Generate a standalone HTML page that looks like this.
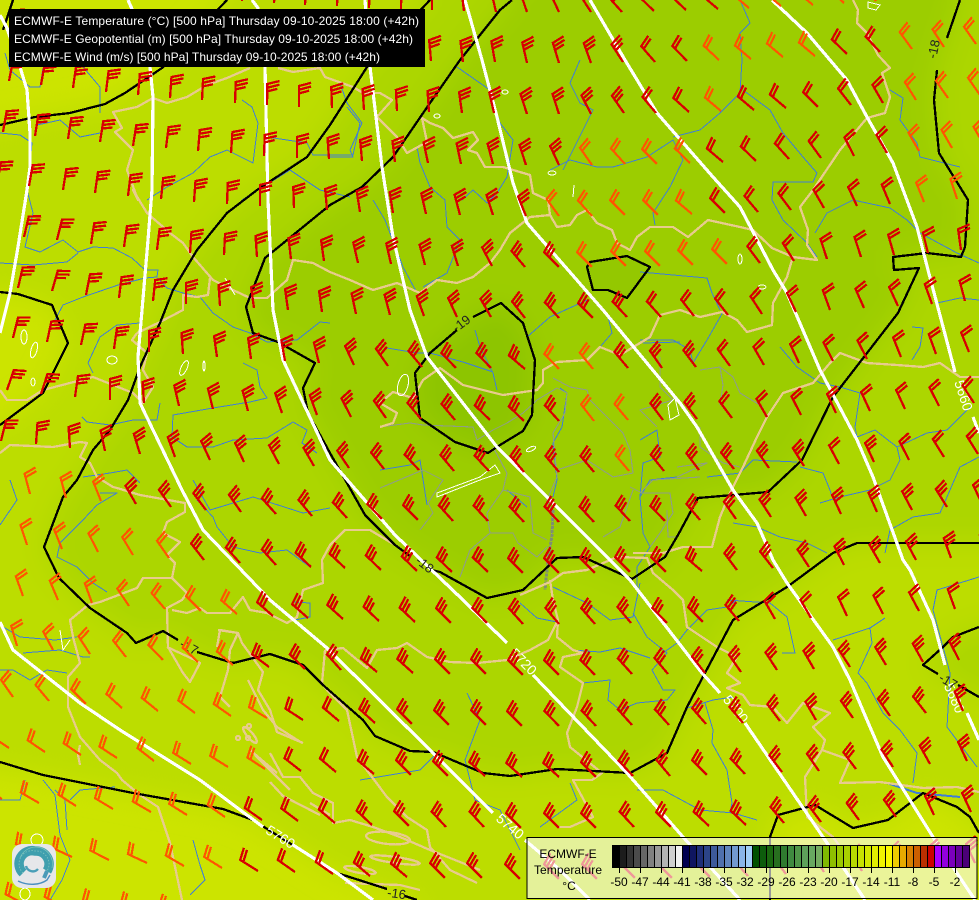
<!DOCTYPE html>
<html><head><meta charset="utf-8"><title>ECMWF-E map</title>
<style>html,body{margin:0;padding:0;background:#c8e200;width:979px;height:900px;overflow:hidden}svg{display:block;overflow:hidden}text{font-family:"Liberation Sans",sans-serif}</style></head>
<body>
<svg xmlns="http://www.w3.org/2000/svg" width="979" height="900" viewBox="0 0 979 900" shape-rendering="crispEdges">
<defs><filter id="b" x="-10%" y="-10%" width="120%" height="120%"><feGaussianBlur stdDeviation="14"/></filter><clipPath id="c"><rect width="979" height="900"/></clipPath>
<path id="r" fill="none" stroke="#d80000" stroke-width="2.3" d="M0 0V-21l12.1-3.2M0-17.3l12.1-3.2M0-13.6l10.1-2.7"/>
<path id="q" fill="none" stroke="#d80000" stroke-width="2.3" d="M0 0V-21l12.1-3.2M0-17.3l12.1-3.2"/>
<path id="o" fill="none" stroke="#ff5500" stroke-width="2.2" d="M0 0V-21l12.1-3.2M0-17.3l12.1-3.2"/>
</defs>
<g clip-path="url(#c)">
<rect width="979" height="900" fill="#cce400"/>
<g filter="url(#b)">
<polygon fill="#bcdd00" points="240,-40 227,0 162,68 105,104 35,117 0,125 -60,130 -60,292 18,294 52,305 68,343 43,393 0,425 -60,440 -60,762 43,775 133,793 223,809 253,820 337,873 417,900 420,960 770,960 770,837 778,815 815,805 853,828 888,820 923,793 957,807 979,833 1040,840 1040,-40"/>
<polygon fill="#acd600" points="430,-40 430,0 367,67 330,125 307,157 257,190 227,213 197,250 173,290 160,323 140,367 128,400 110,430 93,450 77,480 63,497 44,547 59,578 90,608 127,633 136,643 163,631 180,640 200,653 233,663 270,654 303,665 323,685 363,720 375,736 410,751 433,752 483,773 510,776 557,769 630,773 667,753 687,707 733,620 787,587 833,553 857,543 979,543 1040,540 1040,-40"/>
<polygon fill="#acd600" points="979,627 953,637 943,647 923,665 979,697 1040,700 1040,620"/>
<polygon fill="#9ccd00" points="512,-40 512,0 500,10 460,60 430,103 393,157 362,187 330,205 265,258 246,307 253,333 278,342 315,363 303,388 308,413 330,453 365,515 395,545 440,572 487,598 523,590 557,558 583,557 632,579 665,557 678,535 698,498 768,492 802,460 833,397 898,313 919,268 894,270 893,257 927,253 961,257 965,247 968,200 939,153 934,100 937,70 960,0 960,-40"/>
<polygon fill="#8dc500" points="501,303 523,323 535,360 532,415 523,431 500,445 488,453 455,442 420,418 415,373 430,353 457,330 473,317"/>
</g>
<polygon fill="#92c700" opacity=".8" points="590,262 627,256 650,267 627,298 608,290 593,290 587,267"/>

<!-- rivers -->
<g fill="none" stroke="#3f7ed6" stroke-width="1" stroke-linejoin="round">
<polyline points="27,190 33,213 25,247 40,252 63,240 78,252 93,247 113,248 132,258 145,270 158,270 157,277 145,278 118,285 83,297 63,305 55,320"/>
<polyline points="0,263 33,265 67,262 78,253"/>
<polyline points="158,278 167,288 183,293 200,297 213,313 233,327 250,333 267,342 297,340 320,322 330,323"/>
<polyline points="93,373 88,363 100,337 117,325 140,323"/>
<polyline points="243,363 257,370 260,387 267,398 250,402 213,408 173,415 172,437 187,447 213,447 233,440 267,438 293,422 307,430 302,443 317,453"/>
<polyline points="160,403 157,420 133,420 110,425 87,422 82,417"/>
<polyline points="83,477 110,473 127,470 140,483"/>
<polyline points="100,493 117,493 97,505 83,520 60,543 57,557 77,567 93,583 107,592"/>
<polyline points="0,525 17,500 10,480"/>
<polyline points="0,625 20,637 55,640 77,637"/><polyline points="23,653 60,650 83,657 90,657"/><polyline points="0,670 13,670 30,680 47,670 67,673"/>
<polyline points="197,500 213,517 217,527 233,547 260,553 287,550 310,567"/>
<polyline points="293,602 310,603 310,617 295,620"/>
<polyline points="193,480 210,510 253,497 303,513 330,508"/>
<polyline points="5,53 10,70 30,87 40,87 43,68"/><polyline points="83,67 100,87 100,113"/><polyline points="0,133 20,135 32,143 30,165"/><polyline points="37,125 60,120 80,137 100,133"/>
<polyline points="147,200 167,187 193,173 210,157 227,150 253,163 258,123 252,107 242,100"/>
<polyline points="267,137 307,143 313,155 353,155 360,123 347,107"/><polyline points="242,200 290,170 320,190 350,197"/>
<polyline points="340,83 347,103 362,123 350,150 353,157 330,157"/>
<polyline points="417,147 420,163 430,187 445,200 447,227 460,240 447,273 423,287"/>
<polyline points="373,200 385,220 403,267 417,293"/>
<polyline points="457,67 490,90 500,123 513,140 507,177 497,193 487,203 473,190 462,200"/>
<polyline points="580,60 570,83 580,103 593,110 563,170"/>
<polyline points="550,170 570,160 597,167 613,167 647,157 673,140 683,160 670,187 653,213 655,225"/>
<polyline points="673,137 700,130 720,113 740,93 742,60 740,33 750,23 740,0"/>
<polyline points="743,90 770,110 783,133 803,157 817,173 813,182 773,182 772,200 783,220 807,243 817,257"/>
<polyline points="815,233 827,213 853,200 890,208 907,220 920,233 957,253 979,263"/>
<polyline points="890,90 903,98 900,120 917,143 920,157 960,167"/>
<polyline points="640,272 673,275 707,278 712,293 720,310"/>
<polyline points="640,340 673,340 690,350 693,363 707,340 723,312"/>
<polyline points="937,303 960,298 979,300"/><polyline points="912,327 923,328 920,347 912,360"/>
<polyline points="780,347 797,367 820,383 840,387 860,393 855,427 857,437 875,430 897,447 927,433 947,430 970,407"/>
<polyline points="897,447 900,460 890,480 870,490 840,497 820,503"/><polyline points="800,467 823,473 830,490 832,497"/>
<polyline points="979,457 960,467 940,513 913,517 890,530 885,553"/>
<polyline points="733,523 757,527 780,537 807,543 827,553"/>
<polyline points="707,477 740,473 753,460 797,462"/>
<polyline points="553,587 587,603 610,620 633,617 640,583"/><polyline points="520,603 537,618 557,622"/>
<polyline points="633,613 647,637 667,653 652,670 663,690 675,690 667,700 637,703 620,710"/>
<polyline points="572,650 600,652 620,648 650,658"/><polyline points="583,683 610,680 608,700 620,710"/>
<polyline points="687,708 713,700 733,697"/><polyline points="705,703 713,730 712,743 727,770 732,803 730,813"/>
<polyline points="637,790 663,790 700,810 733,813 757,820"/><polyline points="570,783 577,800 540,827"/>
<polyline points="737,600 727,607 707,610 687,630 677,643 663,653"/><polyline points="727,600 770,603 787,617 795,653 782,653"/>
<polyline points="833,640 870,628 885,618"/><polyline points="870,628 872,643 858,673 867,683 883,713 900,730 917,753 913,783"/>
<polyline points="979,577 937,590 933,610 950,673 947,727 977,767"/>
<polyline points="887,783 917,793 960,797" stroke-width="2"/>
<polyline points="387,348 417,353 430,353 463,362 493,372"/><polyline points="475,330 480,347 493,373 497,390"/>
<polyline points="527,337 550,317 587,300"/><polyline points="607,313 612,333 600,347"/><polyline points="643,343 680,342"/>
<polyline points="560,388 567,393 562,427 553,443 557,480 553,497"/><polyline points="640,440 657,430 660,457 643,463 640,497 650,480 677,477"/>
<polyline points="640,497 643,533 650,547 637,567 637,587"/><polyline points="380,470 410,465 420,460 427,505"/><polyline points="527,507 507,490"/>
<polyline points="193,840 200,865 205,880 190,895"/><polyline points="43,780 55,795 60,835 70,860 62,880 50,900"/><polyline points="0,800 20,800 25,780"/>
<polyline points="55,790 65,800 67,830"/><polyline points="115,787 80,790 70,800"/>
<polyline points="467,693 480,720 465,760 475,800 500,810 520,850"/>
<polyline points="360,780 420,770 440,750"/>
</g>
<!-- grey borders -->
<g fill="none" stroke="#8f9f85" stroke-width="1.1" stroke-linejoin="round">
<polyline points="380,427 410,423 423,425 473,427 477,440 493,430 507,423 523,413 537,400 557,388 567,393 565,413 553,433 557,477 547,500 553,513 550,553"/>
<polyline points="380,488 423,470 443,480 428,503 433,513 420,530"/>
<polyline points="493,447 507,473 503,490 530,497 533,533 547,540"/>
<polyline points="503,490 487,513 490,533 513,533 518,543 537,557 547,547"/>
<polyline points="490,533 470,550 460,577"/>
<polyline points="553,378 570,387 587,390 590,400 607,417 623,433 630,450 633,473 613,477 587,460 557,470"/>
<polyline points="630,487 642,493 670,493 673,513 660,533 650,547"/><polyline points="603,537 620,527 627,507 633,490"/>
<polyline points="720,367 733,377 740,393 763,407"/><polyline points="700,370 720,367 723,385 720,405"/>
<polyline points="660,357 660,387 673,400 640,410 657,427"/>
<polyline points="700,427 700,447 723,463 740,467"/><polyline points="677,467 707,463 677,477"/>
<polyline points="640,493 653,480 700,477"/><polyline points="667,510 668,537 677,537"/>
</g>
<polyline fill="none" stroke="#7f9070" stroke-width="3" stroke-dasharray="3 1" points="553,510 552,535 548,560 545,590"/>
<!-- tan borders -->
<g fill="none" stroke="#e8cb8e" stroke-width="2.3" stroke-linejoin="round">
<polyline points="250,68 227,78 207,85 187,97 167,103 153,98 137,107 113,112 122,128 115,132 133,150 127,170 138,200 133,190 147,213 170,233 183,243 193,257 213,280 233,290 250,298 267,298 287,280 293,260 313,263 330,272 350,280 373,290 397,283 420,293 437,280 457,283 473,277 490,263 500,250 510,233 530,217 550,215 557,227 570,225 577,215 587,210 597,223 612,230 617,243 630,250 637,237 650,227 673,227 688,237 708,220 740,227 753,230 772,248 793,257 817,260 807,245 808,230 800,207 813,190 840,150 867,118 885,113 890,97 882,73 890,68 878,55 867,33 857,23 858,10 853,0"/>
<polyline points="278,68 293,72 320,68 325,77 353,87 363,93 380,93 392,100 377,117 383,123 397,137 407,153 427,142 422,118 430,123 443,128 453,138 473,132 478,140 468,150 477,153 485,167 503,167 530,175 533,193 548,200 550,215"/>
<polyline points="792,260 787,277 773,303 772,325 747,332 737,320 722,312 700,317 680,310 660,315 650,337 620,355 600,347 587,360 557,362 543,370 543,383 537,390 503,395 463,385 440,368 423,380 413,398 393,392 380,403 397,413 393,423 380,427"/>
<polyline points="137,333 160,322 183,310 183,295 197,297 208,295 210,278"/>
<polyline points="137,333 132,340 147,353 143,370 153,387 143,403 133,393 93,377 43,390 27,400 7,400 0,390"/>
<polyline points="0,453 10,445 53,447 80,442 87,443 80,457 90,463 97,477 113,487 117,488 140,495 185,503 185,512 167,522 163,533 180,542 167,555 175,563 172,578 143,578 137,588 100,602 88,605 70,620 73,637 80,663 68,677 68,707 80,737 100,760 117,773 122,780 140,795 158,807 170,843 182,900"/>
<polyline points="172,578 187,593 182,600 167,608 168,647 183,673 190,682 200,663 195,660 167,647"/>
<polyline points="172,610 187,613 200,608 207,613 230,613 243,597 250,610 267,613 287,623 297,617 303,590 323,583 322,560 330,545 345,530 370,530 395,545"/>
<polyline points="218,630 238,633 230,650 228,670 220,697 230,707"/>
<polyline points="217,647 220,630 238,633 242,643 263,672 258,690 270,710 277,732 303,743"/>
<polyline points="248,680 253,690 263,710 277,727 302,743"/>
<polyline points="250,750 277,773"/><polyline points="270,753 283,777 300,777 313,793 333,803 333,823 350,820 373,827 400,837 430,850 480,870"/>
<polyline points="325,650 343,648 367,668 377,650 397,648 407,643 427,657 450,662 477,663 507,660 530,650 548,640 558,620"/>
<polyline points="325,650 322,683 327,690 347,710 357,757 387,797 407,817 427,830 430,847 450,870 477,883"/>
<polyline points="550,580 553,600 558,620 557,637 573,650 583,653 563,657 560,667 583,683 577,707 567,733 570,747 602,773 592,780 573,780 593,817 570,827 558,827"/>
<polyline points="520,595 550,582 563,573 587,570 617,557 647,558 653,573 673,590 683,600 687,627 717,647 737,657 727,673 740,683 727,688 743,695 750,705 773,707 787,723 803,703 830,713 813,727 825,740 822,750 850,760 840,783 880,782 923,788 957,787 979,792"/>
<polyline points="822,750 805,777 807,817 833,837 850,860"/>
<polyline points="663,553 683,547 712,547 720,517 730,493 743,467 757,437 767,417 783,393 813,383 830,363 840,353 867,363 897,365 923,367 940,363 960,377 979,377"/>
<polyline points="633,553 663,553"/>
<ellipse cx="388" cy="838" rx="22" ry="6" transform="rotate(6 388 838)"/>
<ellipse cx="360" cy="870" rx="16" ry="3" transform="rotate(10 360 870)"/>
<ellipse cx="395" cy="860" rx="25" ry="3" transform="rotate(8 395 860)"/>
<ellipse cx="250" cy="735" rx="10" ry="3" transform="rotate(50 250 735)"/>
<polyline points="270,782 283,796 320,815"/><polyline points="255,755 270,770 290,790"/>
<polyline points="310,803 330,815"/><polyline points="345,883 400,885 420,890"/>
<circle cx="238" cy="738" r="2"/><circle cx="248" cy="738" r="2"/><circle cx="249" cy="726" r="2"/>
<polyline points="80,745 78,755 80,765"/>
</g>
<!-- white lakes -->
<g fill="none" stroke="#fff" stroke-width="1">
<ellipse cx="24" cy="337" rx="3" ry="7"/><ellipse cx="34" cy="350" rx="3" ry="8" transform="rotate(15 34 350)"/>
<ellipse cx="112" cy="360" rx="5" ry="4"/><ellipse cx="184" cy="368" rx="3" ry="8" transform="rotate(25 184 368)"/>
<ellipse cx="33" cy="382" rx="2" ry="4"/><ellipse cx="204" cy="366" rx="1" ry="5"/>
<polygon points="437,497 480,480 500,473 495,465 480,477 437,493"/>
<ellipse cx="403" cy="385" rx="5" ry="11" transform="rotate(15 403 385)"/>
<ellipse cx="531" cy="449" rx="5" ry="2" transform="rotate(-25 531 449)"/>
<polygon points="668,405 675,398 679,415 670,420"/><ellipse cx="762" cy="287" rx="4" ry="2"/>
<ellipse cx="37" cy="840" rx="6" ry="6"/><ellipse cx="25" cy="894" rx="5" ry="6"/>
<ellipse cx="505" cy="92" rx="3" ry="2"/><ellipse cx="437" cy="116" rx="3" ry="2"/>
<ellipse cx="552" cy="173" rx="4" ry="2"/><polyline points="574,185 573,197"/>
<polygon points="868,2 880,5 876,10 868,8"/><ellipse cx="740" cy="259" rx="2" ry="5"/>
<polyline points="225,278 235,295"/><polyline points="60,630 63,650 70,640"/>
</g>
<!-- black contours -->
<g fill="none" stroke="#000" stroke-width="2.3" stroke-linejoin="round">
<polyline points="13,0 3,30"/>
<polyline points="227,0 162,68 125,93 105,104 70,113 35,117 0,125"/>
<polyline points="0,292 18,294 52,305 68,343 43,393 0,425"/>
<polyline points="0,762 43,775 133,793 223,809 253,820 337,873 387,889"/><polyline points="405,896 417,900"/>
<polyline points="770,900 770,837 778,815 815,805 853,828 888,820 923,793 957,807 970,817 979,833"/>
<polyline points="430,0 367,67 330,125 307,157 257,190 227,213 197,250 173,290 160,323 140,367 128,400 110,430 93,450 77,480 63,497 44,547 59,578 90,608 127,633 136,643 163,631 178,640"/>
<polyline points="197,652 233,663 270,654 303,665 323,685 363,720 375,736 410,751 433,752 483,773 510,776 557,769 630,773 667,753 687,707 733,620 787,587 833,553 857,543 979,543"/>
<polyline points="979,627 953,637 943,647 923,665 938,674"/><polyline points="958,685 979,697"/>
<polyline points="512,0 500,10 460,60 430,103 393,157 362,187 330,205 265,258 246,307 253,333 278,342 315,363 303,388 308,413 330,453 365,515 395,545 410,556"/>
<polyline points="432,570 440,572 487,598 523,590 557,558 583,557 632,579 665,557 678,535 698,498 768,492 802,460 833,397 898,313 919,268 894,270 893,257 927,253 961,257 965,247 968,200 939,153 934,100 937,70"/>
<polyline points="947,38 960,0"/>
<polyline points="473,317 501,303 523,323 535,360 532,415 523,431 500,445 488,453 455,442 420,418 415,373 430,353 457,330"/>
<polygon points="590,262 627,256 650,267 627,298 608,290 593,290 587,267"/>
</g>
<!-- white height contours -->
<g fill="none" stroke="#fff" stroke-width="3.2" stroke-linejoin="round">
<polyline points="0,15 7,28 20,67 27,90 30,133 30,167 27,190 18,247 10,293 0,333"/>
<polyline points="0,622 13,650 80,703 120,730 200,780 263,827"/><polyline points="293,845 337,873 373,900"/>
<polyline points="128,0 132,9 150,67 153,97 152,190 148,240 138,357 140,403 182,490 203,530 270,600 327,648 433,753 493,813"/><polyline points="525,840 560,870 590,900"/>
<polyline points="252,0 258,8 265,67 268,200 273,310 283,360 330,460 395,535 463,600 507,643"/><polyline points="533,675 627,773 683,837 740,900"/>
<polyline points="365,0 370,67 382,167 393,237 410,310 427,357 497,447 543,493 590,540 630,580 702,673 720,693"/><polyline points="745,723 823,837 865,900"/>
<polyline points="465,0 482,60 497,117 513,183 527,223 603,310 680,403 697,427 733,490 757,523 773,560 787,583 833,647 850,680 867,720 883,757 933,837 975,900"/>
<polyline points="590,0 625,60 657,113 713,177 740,207 773,270 787,293 820,370 857,440 873,477 903,560 910,570 933,620 945,665"/><polyline points="967,713 979,740"/>
<polyline points="772,0 807,33 847,80 867,117 893,163 917,227 928,270 955,372"/><polyline points="973,417 979,433"/>
</g>
<!-- contour labels -->
<g fill="#fff" font-size="14" text-anchor="middle">
<text transform="translate(278,841) rotate(32)">5760</text>
<text transform="translate(507,830) rotate(40)">5740</text>
<text transform="translate(520,665) rotate(45)">5720</text>
<text transform="translate(732,712) rotate(52)">5700</text>
<text transform="translate(950,700) rotate(66)">5680</text>
<text transform="translate(959,397) rotate(72)">5660</text>
</g>
<g fill="#222" font-size="13" text-anchor="middle">
<text transform="translate(464,327) rotate(-37)">-19</text>
<text transform="translate(938,50) rotate(-78)">-18</text>
<text transform="translate(422,568) rotate(38)">-18</text>
<text transform="translate(187,651) rotate(28)">-17</text>
<text transform="translate(946,685) rotate(30)">-17</text>
<text transform="translate(396,898) rotate(8)">-16</text>
</g>

<!-- wind barbs -->
<g>
<use href="#r" transform="translate(15 30)rotate(16)"/><use href="#r" transform="translate(50 34)rotate(15)"/>
<use href="#r" transform="translate(242 1)rotate(5)"/><use href="#r" transform="translate(274 3)rotate(4)"/><use href="#r" transform="translate(305 5)rotate(3)"/><use href="#r" transform="translate(337 6)rotate(2)"/><use href="#r" transform="translate(369 8)rotate(2)"/><use href="#r" transform="translate(401 9)rotate(1)"/>
<use href="#r" transform="translate(432 10)rotate(0)"/><use href="#r" transform="translate(464 11)rotate(-7)"/><use href="#r" transform="translate(496 12)rotate(-13)"/><use href="#r" transform="translate(527 12)rotate(-19)"/><use href="#r" transform="translate(559 12)rotate(-25)"/><use href="#r" transform="translate(591 12)rotate(-33)"/><use href="#r" transform="translate(622 12)rotate(-42)"/><use href="#q" transform="translate(654 11)rotate(-46)"/><use href="#q" transform="translate(686 10)rotate(-47)"/><use href="#q" transform="translate(718 9)rotate(-50)"/><use href="#o" transform="translate(749 8)rotate(-50)"/><use href="#o" transform="translate(781 6)rotate(-50)"/><use href="#o" transform="translate(813 5)rotate(-50)"/><use href="#o" transform="translate(844 3)rotate(-46)"/><use href="#o" transform="translate(876 1)rotate(-43)"/>

<use href="#r" transform="translate(431 61)rotate(-5)"/><use href="#r" transform="translate(463 62)rotate(-7)"/><use href="#r" transform="translate(495 62)rotate(-10)"/><use href="#r" transform="translate(527 63)rotate(-13)"/><use href="#r" transform="translate(559 63)rotate(-17)"/><use href="#r" transform="translate(591 63)rotate(-20)"/><use href="#r" transform="translate(623 62)rotate(-33)"/><use href="#q" transform="translate(655 62)rotate(-41)"/><use href="#q" transform="translate(687 61)rotate(-44)"/><use href="#o" transform="translate(719 60)rotate(-47)"/><use href="#o" transform="translate(751 59)rotate(-50)"/><use href="#o" transform="translate(783 57)rotate(-50)"/><use href="#o" transform="translate(815 56)rotate(-50)"/><use href="#q" transform="translate(847 54)rotate(-46)"/><use href="#q" transform="translate(880 52)rotate(-43)"/><use href="#o" transform="translate(912 49)rotate(-36)"/><use href="#o" transform="translate(944 47)rotate(-33)"/><use href="#o" transform="translate(976 44)rotate(-35)"/>

<use href="#r" transform="translate(9 81)rotate(11)"/><use href="#r" transform="translate(41 85)rotate(10)"/><use href="#r" transform="translate(73 88)rotate(8)"/><use href="#r" transform="translate(106 92)rotate(7)"/><use href="#r" transform="translate(138 95)rotate(5)"/><use href="#r" transform="translate(170 98)rotate(4)"/><use href="#r" transform="translate(202 100)rotate(3)"/><use href="#r" transform="translate(235 103)rotate(2)"/><use href="#r" transform="translate(267 105)rotate(1)"/><use href="#r" transform="translate(299 107)rotate(0)"/><use href="#r" transform="translate(332 108)rotate(-2)"/><use href="#r" transform="translate(364 110)rotate(-4)"/><use href="#r" transform="translate(397 111)rotate(-3)"/><use href="#r" transform="translate(429 112)rotate(-4)"/><use href="#r" transform="translate(462 113)rotate(-8)"/><use href="#r" transform="translate(494 113)rotate(-13)"/><use href="#r" transform="translate(527 114)rotate(-18)"/><use href="#r" transform="translate(559 114)rotate(-18)"/><use href="#r" transform="translate(591 114)rotate(-27)"/><use href="#r" transform="translate(624 113)rotate(-35)"/><use href="#q" transform="translate(656 113)rotate(-40)"/><use href="#q" transform="translate(689 112)rotate(-48)"/><use href="#o" transform="translate(721 111)rotate(-50)"/><use href="#q" transform="translate(754 110)rotate(-50)"/><use href="#q" transform="translate(786 108)rotate(-50)"/><use href="#q" transform="translate(818 107)rotate(-45)"/><use href="#q" transform="translate(851 105)rotate(-38)"/><use href="#q" transform="translate(883 103)rotate(-30)"/><use href="#o" transform="translate(916 100)rotate(-32)"/><use href="#o" transform="translate(948 98)rotate(-35)"/><use href="#o" transform="translate(980 95)rotate(-35)"/>

<use href="#r" transform="translate(3 132)rotate(10)"/><use href="#r" transform="translate(35 136)rotate(9)"/><use href="#r" transform="translate(68 139)rotate(9)"/><use href="#r" transform="translate(100 142)rotate(9)"/><use href="#r" transform="translate(133 146)rotate(9)"/><use href="#r" transform="translate(166 148)rotate(7)"/><use href="#r" transform="translate(198 151)rotate(5)"/><use href="#r" transform="translate(231 153)rotate(4)"/><use href="#r" transform="translate(264 156)rotate(2)"/><use href="#r" transform="translate(297 158)rotate(0)"/><use href="#r" transform="translate(329 159)rotate(-4)"/><use href="#r" transform="translate(362 161)rotate(-5)"/><use href="#r" transform="translate(395 162)rotate(-7)"/><use href="#r" transform="translate(428 163)rotate(-12)"/><use href="#r" transform="translate(461 164)rotate(-12)"/><use href="#r" transform="translate(493 164)rotate(-15)"/><use href="#r" transform="translate(526 165)rotate(-18)"/><use href="#r" transform="translate(559 165)rotate(-25)"/><use href="#o" transform="translate(592 165)rotate(-35)"/><use href="#o" transform="translate(625 164)rotate(-42)"/><use href="#o" transform="translate(657 164)rotate(-45)"/><use href="#o" transform="translate(690 163)rotate(-46)"/><use href="#q" transform="translate(723 162)rotate(-50)"/><use href="#q" transform="translate(756 161)rotate(-46)"/><use href="#q" transform="translate(789 159)rotate(-42)"/><use href="#q" transform="translate(821 158)rotate(-36)"/><use href="#q" transform="translate(854 156)rotate(-27)"/><use href="#q" transform="translate(887 153)rotate(-30)"/><use href="#o" transform="translate(919 151)rotate(-30)"/><use href="#o" transform="translate(952 148)rotate(-30)"/><use href="#o" transform="translate(984 145)rotate(-30)"/>

<use href="#r" transform="translate(-3 183)rotate(11)"/><use href="#r" transform="translate(29 186)rotate(10)"/><use href="#r" transform="translate(63 190)rotate(9)"/><use href="#r" transform="translate(95 193)rotate(8)"/><use href="#r" transform="translate(128 196)rotate(7)"/><use href="#r" transform="translate(161 199)rotate(6)"/><use href="#r" transform="translate(194 202)rotate(4)"/><use href="#r" transform="translate(227 204)rotate(2)"/><use href="#r" transform="translate(260 206)rotate(0)"/><use href="#r" transform="translate(294 208)rotate(-2)"/><use href="#r" transform="translate(327 210)rotate(-5)"/><use href="#r" transform="translate(360 212)rotate(-9)"/><use href="#r" transform="translate(393 213)rotate(-9)"/><use href="#r" transform="translate(426 214)rotate(-13)"/><use href="#r" transform="translate(460 215)rotate(-15)"/><use href="#r" transform="translate(493 215)rotate(-18)"/><use href="#r" transform="translate(526 216)rotate(-22)"/><use href="#o" transform="translate(559 216)rotate(-36)"/><use href="#o" transform="translate(592 216)rotate(-42)"/><use href="#o" transform="translate(625 215)rotate(-45)"/><use href="#o" transform="translate(658 215)rotate(-45)"/><use href="#o" transform="translate(692 214)rotate(-50)"/><use href="#q" transform="translate(725 213)rotate(-45)"/><use href="#q" transform="translate(758 212)rotate(-40)"/><use href="#q" transform="translate(791 210)rotate(-37)"/><use href="#q" transform="translate(824 208)rotate(-30)"/><use href="#q" transform="translate(857 206)rotate(-25)"/><use href="#q" transform="translate(890 204)rotate(-23)"/><use href="#o" transform="translate(924 202)rotate(-22)"/><use href="#o" transform="translate(957 199)rotate(-18)"/><use href="#o" transform="translate(990 196)rotate(-18)"/>

<use href="#r" transform="translate(24 237)rotate(13)"/><use href="#r" transform="translate(57 240)rotate(14)"/><use href="#r" transform="translate(91 244)rotate(9)"/><use href="#r" transform="translate(124 247)rotate(8)"/><use href="#r" transform="translate(157 250)rotate(7)"/><use href="#r" transform="translate(190 253)rotate(4)"/><use href="#r" transform="translate(224 255)rotate(3)"/><use href="#r" transform="translate(257 257)rotate(-4)"/><use href="#r" transform="translate(291 259)rotate(-7)"/><use href="#r" transform="translate(324 261)rotate(-8)"/><use href="#r" transform="translate(358 263)rotate(-13)"/><use href="#r" transform="translate(391 264)rotate(-13)"/><use href="#r" transform="translate(425 265)rotate(-15)"/><use href="#r" transform="translate(458 266)rotate(-17)"/><use href="#r" transform="translate(492 266)rotate(-28)"/><use href="#r" transform="translate(525 267)rotate(-40)"/><use href="#r" transform="translate(559 267)rotate(-45)"/><use href="#o" transform="translate(592 267)rotate(-45)"/><use href="#o" transform="translate(626 266)rotate(-45)"/><use href="#o" transform="translate(660 266)rotate(-45)"/><use href="#o" transform="translate(693 265)rotate(-45)"/><use href="#o" transform="translate(727 264)rotate(-45)"/><use href="#q" transform="translate(760 263)rotate(-37)"/><use href="#q" transform="translate(794 261)rotate(-32)"/><use href="#q" transform="translate(827 259)rotate(-18)"/><use href="#q" transform="translate(861 257)rotate(-18)"/><use href="#q" transform="translate(894 255)rotate(-16)"/><use href="#q" transform="translate(928 253)rotate(-14)"/><use href="#q" transform="translate(961 250)rotate(-8)"/><use href="#q" transform="translate(994 247)rotate(-8)"/>

<use href="#r" transform="translate(18 288)rotate(13)"/><use href="#r" transform="translate(52 291)rotate(16)"/><use href="#r" transform="translate(86 295)rotate(11)"/><use href="#r" transform="translate(119 298)rotate(7)"/><use href="#r" transform="translate(153 301)rotate(6)"/><use href="#r" transform="translate(186 304)rotate(0)"/><use href="#r" transform="translate(220 306)rotate(-4)"/><use href="#r" transform="translate(254 308)rotate(-8)"/><use href="#r" transform="translate(288 310)rotate(-8)"/><use href="#r" transform="translate(322 312)rotate(-8)"/><use href="#r" transform="translate(356 314)rotate(-12)"/><use href="#r" transform="translate(390 315)rotate(-15)"/><use href="#r" transform="translate(424 316)rotate(-20)"/><use href="#r" transform="translate(457 317)rotate(-25)"/><use href="#r" transform="translate(491 317)rotate(-30)"/><use href="#r" transform="translate(525 318)rotate(-38)"/><use href="#r" transform="translate(559 318)rotate(-42)"/><use href="#r" transform="translate(593 318)rotate(-45)"/><use href="#r" transform="translate(627 317)rotate(-43)"/><use href="#q" transform="translate(661 317)rotate(-42)"/><use href="#q" transform="translate(694 316)rotate(-38)"/><use href="#q" transform="translate(728 315)rotate(-38)"/><use href="#q" transform="translate(762 314)rotate(-33)"/><use href="#q" transform="translate(796 312)rotate(-25)"/><use href="#q" transform="translate(830 310)rotate(-20)"/><use href="#q" transform="translate(864 308)rotate(-24)"/><use href="#q" transform="translate(898 306)rotate(-25)"/><use href="#q" transform="translate(932 304)rotate(-20)"/><use href="#q" transform="translate(965 301)rotate(-15)"/>

<use href="#r" transform="translate(13 338)rotate(14)"/><use href="#r" transform="translate(47 342)rotate(12)"/><use href="#r" transform="translate(81 345)rotate(12)"/><use href="#r" transform="translate(114 349)rotate(8)"/><use href="#r" transform="translate(149 352)rotate(0)"/><use href="#r" transform="translate(183 354)rotate(-4)"/><use href="#r" transform="translate(217 357)rotate(-8)"/><use href="#r" transform="translate(251 359)rotate(-8)"/><use href="#r" transform="translate(285 361)rotate(-10)"/><use href="#r" transform="translate(319 363)rotate(-14)"/><use href="#r" transform="translate(354 365)rotate(-25)"/><use href="#r" transform="translate(388 366)rotate(-35)"/><use href="#r" transform="translate(422 367)rotate(-40)"/><use href="#r" transform="translate(456 368)rotate(-44)"/><use href="#r" transform="translate(491 368)rotate(-44)"/><use href="#r" transform="translate(525 369)rotate(-50)"/><use href="#o" transform="translate(559 369)rotate(-44)"/><use href="#o" transform="translate(593 369)rotate(-39)"/><use href="#r" transform="translate(628 368)rotate(-40)"/><use href="#r" transform="translate(662 368)rotate(-35)"/><use href="#r" transform="translate(696 367)rotate(-37)"/><use href="#q" transform="translate(730 366)rotate(-36)"/><use href="#q" transform="translate(764 365)rotate(-30)"/><use href="#q" transform="translate(799 363)rotate(-25)"/><use href="#q" transform="translate(833 361)rotate(-27)"/><use href="#q" transform="translate(867 359)rotate(-27)"/><use href="#q" transform="translate(901 357)rotate(-22)"/><use href="#q" transform="translate(936 354)rotate(-20)"/><use href="#q" transform="translate(969 352)rotate(-22)"/>

<use href="#r" transform="translate(7 390)rotate(19)"/><use href="#r" transform="translate(41 394)rotate(18)"/><use href="#r" transform="translate(75 397)rotate(8)"/><use href="#r" transform="translate(110 400)rotate(0)"/><use href="#r" transform="translate(144 403)rotate(-4)"/><use href="#r" transform="translate(179 406)rotate(-13)"/><use href="#r" transform="translate(213 409)rotate(-14)"/><use href="#r" transform="translate(248 411)rotate(-15)"/><use href="#r" transform="translate(282 413)rotate(-19)"/><use href="#r" transform="translate(317 415)rotate(-20)"/><use href="#r" transform="translate(351 417)rotate(-27)"/><use href="#r" transform="translate(386 418)rotate(-35)"/><use href="#r" transform="translate(421 419)rotate(-40)"/><use href="#r" transform="translate(455 420)rotate(-40)"/><use href="#r" transform="translate(490 420)rotate(-46)"/><use href="#r" transform="translate(524 421)rotate(-46)"/><use href="#r" transform="translate(559 421)rotate(-42)"/><use href="#o" transform="translate(594 421)rotate(-38)"/><use href="#o" transform="translate(628 420)rotate(-40)"/><use href="#r" transform="translate(663 420)rotate(-37)"/><use href="#r" transform="translate(697 419)rotate(-37)"/><use href="#q" transform="translate(732 418)rotate(-37)"/><use href="#q" transform="translate(767 417)rotate(-30)"/><use href="#q" transform="translate(801 415)rotate(-27)"/><use href="#q" transform="translate(836 413)rotate(-25)"/><use href="#q" transform="translate(870 411)rotate(-25)"/><use href="#q" transform="translate(905 409)rotate(-25)"/><use href="#q" transform="translate(939 406)rotate(-27)"/><use href="#q" transform="translate(974 403)rotate(-33)"/>

<use href="#r" transform="translate(1 441)rotate(14)"/><use href="#r" transform="translate(36 444)rotate(4)"/><use href="#r" transform="translate(70 448)rotate(-4)"/><use href="#r" transform="translate(105 451)rotate(-12)"/><use href="#r" transform="translate(140 454)rotate(-17)"/><use href="#r" transform="translate(175 457)rotate(-20)"/><use href="#r" transform="translate(210 460)rotate(-25)"/><use href="#r" transform="translate(244 462)rotate(-25)"/><use href="#r" transform="translate(279 464)rotate(-28)"/><use href="#r" transform="translate(314 466)rotate(-30)"/><use href="#r" transform="translate(349 468)rotate(-34)"/><use href="#r" transform="translate(384 469)rotate(-38)"/><use href="#r" transform="translate(419 470)rotate(-43)"/><use href="#r" transform="translate(454 471)rotate(-40)"/><use href="#r" transform="translate(489 471)rotate(-43)"/><use href="#r" transform="translate(524 472)rotate(-40)"/><use href="#r" transform="translate(559 472)rotate(-40)"/><use href="#r" transform="translate(594 472)rotate(-40)"/><use href="#o" transform="translate(629 471)rotate(-40)"/><use href="#r" transform="translate(664 471)rotate(-39)"/><use href="#r" transform="translate(699 470)rotate(-37)"/><use href="#r" transform="translate(734 469)rotate(-38)"/><use href="#r" transform="translate(769 468)rotate(-35)"/><use href="#r" transform="translate(804 466)rotate(-32)"/><use href="#q" transform="translate(839 464)rotate(-28)"/><use href="#r" transform="translate(874 462)rotate(-25)"/><use href="#q" transform="translate(909 460)rotate(-27)"/><use href="#q" transform="translate(944 457)rotate(-32)"/><use href="#q" transform="translate(978 454)rotate(-32)"/>

<use href="#o" transform="translate(30 494)rotate(-15)"/><use href="#o" transform="translate(66 498)rotate(-15)"/><use href="#o" transform="translate(101 501)rotate(-22)"/><use href="#r" transform="translate(136 504)rotate(-30)"/><use href="#r" transform="translate(171 507)rotate(-35)"/><use href="#r" transform="translate(206 510)rotate(-37)"/><use href="#r" transform="translate(241 512)rotate(-35)"/><use href="#r" transform="translate(276 514)rotate(-42)"/><use href="#r" transform="translate(312 516)rotate(-40)"/><use href="#r" transform="translate(347 518)rotate(-42)"/><use href="#r" transform="translate(382 519)rotate(-44)"/><use href="#r" transform="translate(418 520)rotate(-45)"/><use href="#r" transform="translate(453 521)rotate(-42)"/><use href="#r" transform="translate(488 521)rotate(-43)"/><use href="#r" transform="translate(524 522)rotate(-43)"/><use href="#r" transform="translate(559 522)rotate(-43)"/><use href="#r" transform="translate(594 522)rotate(-43)"/><use href="#r" transform="translate(630 521)rotate(-43)"/><use href="#r" transform="translate(665 521)rotate(-44)"/><use href="#r" transform="translate(700 520)rotate(-40)"/><use href="#r" transform="translate(736 519)rotate(-35)"/><use href="#r" transform="translate(771 517)rotate(-33)"/><use href="#r" transform="translate(806 516)rotate(-30)"/><use href="#r" transform="translate(841 514)rotate(-25)"/><use href="#r" transform="translate(877 512)rotate(-24)"/><use href="#r" transform="translate(912 510)rotate(-28)"/><use href="#r" transform="translate(947 507)rotate(-32)"/><use href="#q" transform="translate(982 504)rotate(-25)"/>

<use href="#o" transform="translate(27 545)rotate(-18)"/><use href="#o" transform="translate(62 549)rotate(-22)"/><use href="#o" transform="translate(98 552)rotate(-27)"/><use href="#o" transform="translate(133 555)rotate(-31)"/><use href="#o" transform="translate(169 558)rotate(-35)"/><use href="#r" transform="translate(204 560)rotate(-38)"/><use href="#r" transform="translate(240 563)rotate(-42)"/><use href="#r" transform="translate(276 565)rotate(-42)"/><use href="#r" transform="translate(311 567)rotate(-47)"/><use href="#r" transform="translate(345 568)rotate(-47)"/><use href="#r" transform="translate(381 570)rotate(-46)"/><use href="#r" transform="translate(417 571)rotate(-46)"/><use href="#r" transform="translate(452 572)rotate(-46)"/><use href="#r" transform="translate(488 572)rotate(-46)"/><use href="#r" transform="translate(523 573)rotate(-45)"/><use href="#r" transform="translate(559 573)rotate(-45)"/><use href="#r" transform="translate(595 573)rotate(-45)"/><use href="#r" transform="translate(630 572)rotate(-45)"/><use href="#r" transform="translate(666 572)rotate(-45)"/><use href="#r" transform="translate(702 571)rotate(-50)"/><use href="#r" transform="translate(737 570)rotate(-37)"/><use href="#r" transform="translate(773 568)rotate(-38)"/><use href="#r" transform="translate(809 567)rotate(-33)"/><use href="#r" transform="translate(844 565)rotate(-27)"/><use href="#r" transform="translate(880 563)rotate(-30)"/><use href="#r" transform="translate(916 560)rotate(-28)"/><use href="#r" transform="translate(951 558)rotate(-20)"/><use href="#r" transform="translate(987 555)rotate(-20)"/>

<use href="#o" transform="translate(23 596)rotate(-20)"/><use href="#o" transform="translate(58 600)rotate(-23)"/><use href="#o" transform="translate(92 603)rotate(-20)"/><use href="#o" transform="translate(129 606)rotate(-34)"/><use href="#o" transform="translate(165 609)rotate(-40)"/><use href="#o" transform="translate(201 611)rotate(-45)"/><use href="#o" transform="translate(237 614)rotate(-49)"/><use href="#r" transform="translate(273 616)rotate(-49)"/><use href="#r" transform="translate(308 618)rotate(-49)"/><use href="#r" transform="translate(343 619)rotate(-48)"/><use href="#r" transform="translate(379 621)rotate(-47)"/><use href="#r" transform="translate(415 622)rotate(-47)"/><use href="#r" transform="translate(451 623)rotate(-45)"/><use href="#r" transform="translate(487 623)rotate(-44)"/><use href="#r" transform="translate(523 624)rotate(-42)"/><use href="#r" transform="translate(559 624)rotate(-40)"/><use href="#r" transform="translate(595 624)rotate(-41)"/><use href="#r" transform="translate(631 623)rotate(-40)"/><use href="#r" transform="translate(667 623)rotate(-44)"/><use href="#r" transform="translate(703 622)rotate(-45)"/><use href="#r" transform="translate(739 621)rotate(-40)"/><use href="#q" transform="translate(775 619)rotate(-30)"/><use href="#q" transform="translate(811 618)rotate(-30)"/><use href="#q" transform="translate(847 616)rotate(-25)"/><use href="#q" transform="translate(883 614)rotate(-27)"/><use href="#q" transform="translate(919 611)rotate(-28)"/><use href="#q" transform="translate(955 609)rotate(-20)"/><use href="#q" transform="translate(991 606)rotate(-20)"/>

<use href="#o" transform="translate(17 646)rotate(-16)"/><use href="#o" transform="translate(53 650)rotate(-28)"/><use href="#o" transform="translate(90 654)rotate(-33)"/><use href="#o" transform="translate(126 657)rotate(-38)"/><use href="#o" transform="translate(163 660)rotate(-44)"/><use href="#o" transform="translate(198 662)rotate(-47)"/><use href="#o" transform="translate(233 665)rotate(-50)"/><use href="#r" transform="translate(269 667)rotate(-53)"/><use href="#r" transform="translate(305 669)rotate(-46)"/><use href="#r" transform="translate(341 670)rotate(-42)"/><use href="#r" transform="translate(377 672)rotate(-50)"/><use href="#r" transform="translate(413 673)rotate(-48)"/><use href="#r" transform="translate(450 674)rotate(-45)"/><use href="#r" transform="translate(486 674)rotate(-45)"/><use href="#r" transform="translate(523 675)rotate(-45)"/><use href="#r" transform="translate(559 675)rotate(-45)"/><use href="#r" transform="translate(595 675)rotate(-44)"/><use href="#r" transform="translate(632 674)rotate(-42)"/><use href="#r" transform="translate(668 674)rotate(-40)"/><use href="#r" transform="translate(705 673)rotate(-38)"/><use href="#r" transform="translate(741 672)rotate(-35)"/><use href="#r" transform="translate(777 670)rotate(-33)"/><use href="#r" transform="translate(814 669)rotate(-30)"/><use href="#r" transform="translate(850 667)rotate(-33)"/><use href="#r" transform="translate(886 665)rotate(-31)"/><use href="#r" transform="translate(923 662)rotate(-29)"/><use href="#r" transform="translate(959 660)rotate(-27)"/>

<use href="#o" transform="translate(13 697)rotate(-35)"/><use href="#o" transform="translate(49 701)rotate(-40)"/><use href="#o" transform="translate(86 704)rotate(-45)"/><use href="#o" transform="translate(122 708)rotate(-48)"/><use href="#o" transform="translate(158 711)rotate(-51)"/><use href="#o" transform="translate(195 713)rotate(-53)"/><use href="#o" transform="translate(231 716)rotate(-55)"/><use href="#o" transform="translate(267 718)rotate(-59)"/><use href="#q" transform="translate(303 720)rotate(-57)"/><use href="#q" transform="translate(339 721)rotate(-50)"/><use href="#r" transform="translate(375 723)rotate(-48)"/><use href="#r" transform="translate(412 724)rotate(-45)"/><use href="#r" transform="translate(449 725)rotate(-45)"/><use href="#r" transform="translate(486 725)rotate(-45)"/><use href="#r" transform="translate(522 726)rotate(-45)"/><use href="#r" transform="translate(559 726)rotate(-44)"/><use href="#r" transform="translate(596 726)rotate(-43)"/><use href="#r" transform="translate(632 725)rotate(-42)"/><use href="#r" transform="translate(669 725)rotate(-42)"/><use href="#r" transform="translate(706 724)rotate(-41)"/><use href="#r" transform="translate(743 723)rotate(-40)"/><use href="#r" transform="translate(780 721)rotate(-37)"/><use href="#r" transform="translate(816 720)rotate(-30)"/><use href="#r" transform="translate(853 718)rotate(-35)"/><use href="#r" transform="translate(890 716)rotate(-35)"/><use href="#r" transform="translate(926 713)rotate(-38)"/><use href="#r" transform="translate(963 711)rotate(-23)"/>

<use href="#o" transform="translate(9 748)rotate(-56)"/><use href="#o" transform="translate(45 752)rotate(-56)"/><use href="#o" transform="translate(81 755)rotate(-56)"/><use href="#o" transform="translate(117 758)rotate(-57)"/><use href="#o" transform="translate(154 761)rotate(-52)"/><use href="#o" transform="translate(191 764)rotate(-58)"/><use href="#o" transform="translate(228 767)rotate(-58)"/><use href="#o" transform="translate(265 769)rotate(-57)"/><use href="#q" transform="translate(301 771)rotate(-52)"/><use href="#q" transform="translate(336 772)rotate(-50)"/><use href="#r" transform="translate(374 774)rotate(-50)"/><use href="#r" transform="translate(411 775)rotate(-45)"/><use href="#r" transform="translate(448 776)rotate(-45)"/><use href="#r" transform="translate(485 776)rotate(-48)"/><use href="#r" transform="translate(522 777)rotate(-48)"/><use href="#r" transform="translate(559 777)rotate(-48)"/><use href="#r" transform="translate(596 777)rotate(-45)"/><use href="#r" transform="translate(633 776)rotate(-43)"/><use href="#r" transform="translate(670 776)rotate(-40)"/><use href="#r" transform="translate(707 775)rotate(-45)"/><use href="#r" transform="translate(745 774)rotate(-43)"/><use href="#r" transform="translate(782 772)rotate(-37)"/><use href="#r" transform="translate(819 771)rotate(-35)"/><use href="#r" transform="translate(856 769)rotate(-37)"/><use href="#r" transform="translate(893 767)rotate(-33)"/><use href="#r" transform="translate(930 764)rotate(-29)"/><use href="#r" transform="translate(967 761)rotate(-25)"/>

<use href="#o" transform="translate(2 799)rotate(-60)"/><use href="#o" transform="translate(39 803)rotate(-60)"/><use href="#o" transform="translate(76 806)rotate(-57)"/><use href="#o" transform="translate(113 809)rotate(-59)"/><use href="#o" transform="translate(151 812)rotate(-60)"/><use href="#o" transform="translate(187 815)rotate(-58)"/><use href="#o" transform="translate(225 817)rotate(-55)"/><use href="#q" transform="translate(262 820)rotate(-55)"/><use href="#q" transform="translate(298 821)rotate(-53)"/><use href="#q" transform="translate(335 823)rotate(-50)"/><use href="#r" transform="translate(372 825)rotate(-47)"/><use href="#r" transform="translate(409 826)rotate(-45)"/><use href="#r" transform="translate(446 827)rotate(-43)"/><use href="#r" transform="translate(484 827)rotate(-43)"/><use href="#r" transform="translate(521 828)rotate(-45)"/><use href="#r" transform="translate(559 828)rotate(-45)"/><use href="#r" transform="translate(596 828)rotate(-45)"/><use href="#r" transform="translate(634 827)rotate(-43)"/><use href="#r" transform="translate(671 827)rotate(-45)"/><use href="#r" transform="translate(709 826)rotate(-47)"/><use href="#r" transform="translate(746 825)rotate(-47)"/><use href="#r" transform="translate(784 823)rotate(-40)"/><use href="#r" transform="translate(821 822)rotate(-37)"/><use href="#r" transform="translate(859 820)rotate(-36)"/><use href="#r" transform="translate(896 817)rotate(-35)"/><use href="#r" transform="translate(934 815)rotate(-25)"/><use href="#r" transform="translate(971 812)rotate(-25)"/>

<use href="#o" transform="translate(-2 850)rotate(-65)"/><use href="#o" transform="translate(35 853)rotate(-65)"/><use href="#o" transform="translate(72 857)rotate(-65)"/><use href="#o" transform="translate(109 860)rotate(-63)"/><use href="#o" transform="translate(147 863)rotate(-65)"/><use href="#o" transform="translate(184 866)rotate(-60)"/><use href="#o" transform="translate(222 868)rotate(-58)"/><use href="#q" transform="translate(258 871)rotate(-58)"/><use href="#q" transform="translate(295 872)rotate(-55)"/><use href="#q" transform="translate(333 874)rotate(-55)"/><use href="#r" transform="translate(370 876)rotate(-50)"/><use href="#r" transform="translate(407 877)rotate(-50)"/><use href="#r" transform="translate(445 878)rotate(-45)"/><use href="#r" transform="translate(482 878)rotate(-45)"/><use href="#r" transform="translate(520 879)rotate(-45)"/><use href="#r" transform="translate(559 879)rotate(-45)"/><use href="#r" transform="translate(597 879)rotate(-45)"/><use href="#r" transform="translate(635 878)rotate(-45)"/><use href="#r" transform="translate(672 878)rotate(-45)"/><use href="#r" transform="translate(710 877)rotate(-45)"/><use href="#r" transform="translate(748 876)rotate(-42)"/><use href="#r" transform="translate(786 874)rotate(-37)"/><use href="#r" transform="translate(824 872)rotate(-33)"/><use href="#r" transform="translate(862 871)rotate(-31)"/><use href="#r" transform="translate(900 868)rotate(-29)"/><use href="#r" transform="translate(938 866)rotate(-27)"/><use href="#r" transform="translate(975 863)rotate(-25)"/>

<use href="#o" transform="translate(24 904)rotate(-62)"/><use href="#o" transform="translate(63 907)rotate(-61)"/><use href="#o" transform="translate(101 911)rotate(-60)"/><use href="#o" transform="translate(139 914)rotate(-60)"/><use href="#o" transform="translate(177 917)rotate(-58)"/>
</g>

<!-- title -->
<rect x="9" y="9" width="416" height="58" fill="#000"/>
<g fill="#fff" font-size="12">
<text x="14" y="25" textLength="405" lengthAdjust="spacing">ECMWF-E Temperature (°C) [500 hPa] Thursday 09-10-2025 18:00 (+42h)</text>
<text x="14" y="43" textLength="399" lengthAdjust="spacing">ECMWF-E Geopotential (m) [500 hPa] Thursday 09-10-2025 18:00 (+42h)</text>
<text x="14" y="61" textLength="366" lengthAdjust="spacing">ECMWF-E Wind (m/s) [500 hPa] Thursday 09-10-2025 18:00 (+42h)</text>
</g>

<!-- logo -->
<g shape-rendering="geometricPrecision">
<rect x="12" y="844" width="44" height="44" rx="10" fill="#e6e7ea"/>
<g fill="none">
<path d="M23 873 A13 13 0 0 1 35 851 A13 13 0 0 1 47 871" stroke="#3f9fae" stroke-width="9.5"/>
<path d="M23 873 A13 13 0 0 1 35 851 A13 13 0 0 1 47 871" stroke="#8ac8c0" stroke-width=".7" stroke-dasharray="1.5 1.5"/>
<path d="M20 858 A17 17 0 0 1 36 847 A17 17 0 0 1 52 868" stroke="#7ec5bb" stroke-width=".7"/>
<path d="M26 866 A7 7 0 0 0 38 869" stroke="#4a9fb8" stroke-width="2.4"/>
<path d="M18 881 C 28 886 40 885 47 880 L50 875" stroke="#4a8fc0" stroke-width="1.4"/>
<path d="M47 871 L44 878" stroke="#4a9ab8" stroke-width="4"/>
</g>
</g>

<!-- legend -->
<rect x="527" y="837.5" width="450" height="61" fill="#fff" fill-opacity=".6" stroke="#000" stroke-width="1"/>
<g fill="#000" font-size="12" text-anchor="middle">
<text x="568" y="858">ECMWF-E</text>
<text x="568" y="874" textLength="68" lengthAdjust="spacing">Temperature</text>
<text x="569" y="890">°C</text>
</g>
<g stroke="#000" stroke-width=".8">
<rect x="612.5" y="845.5" width="7" height="22" fill="#000"/><rect x="619.5" y="845.5" width="7" height="22" fill="#1c1c1c"/><rect x="626.5" y="845.5" width="7" height="22" fill="#333"/><rect x="633.5" y="845.5" width="7" height="22" fill="#4b4b4b"/><rect x="640.5" y="845.5" width="7" height="22" fill="#666"/><rect x="647.5" y="845.5" width="7" height="22" fill="#808080"/><rect x="654.5" y="845.5" width="7" height="22" fill="#999"/><rect x="661.5" y="845.5" width="7" height="22" fill="#b3b3b3"/><rect x="668.5" y="845.5" width="7" height="22" fill="#cfcfcf"/><rect x="675.5" y="845.5" width="7" height="22" fill="#f0f0f0"/>
<rect x="682.5" y="845.5" width="7" height="22" fill="#00004f"/><rect x="689.5" y="845.5" width="7" height="22" fill="#0f1660"/><rect x="696.5" y="845.5" width="7" height="22" fill="#1e2e78"/><rect x="703.5" y="845.5" width="7" height="22" fill="#2c4488"/><rect x="710.5" y="845.5" width="7" height="22" fill="#3d5a9a"/><rect x="717.5" y="845.5" width="7" height="22" fill="#4f70ac"/><rect x="724.5" y="845.5" width="7" height="22" fill="#6085bd"/><rect x="731.5" y="845.5" width="7" height="22" fill="#7299cf"/><rect x="738.5" y="845.5" width="7" height="22" fill="#8ab5e8"/><rect x="745.5" y="845.5" width="7" height="22" fill="#a0cdf7"/>
<rect x="752.5" y="845.5" width="7" height="22" fill="#005000"/><rect x="759.5" y="845.5" width="7" height="22" fill="#0d5c0c"/><rect x="766.5" y="845.5" width="7" height="22" fill="#1a680f"/><rect x="773.5" y="845.5" width="7" height="22" fill="#286f1f"/><rect x="780.5" y="845.5" width="7" height="22" fill="#2f7a2f"/><rect x="787.5" y="845.5" width="7" height="22" fill="#3f8a3f"/><rect x="794.5" y="845.5" width="7" height="22" fill="#4f9648"/><rect x="801.5" y="845.5" width="7" height="22" fill="#5da05a"/><rect x="808.5" y="845.5" width="7" height="22" fill="#68a860"/><rect x="815.5" y="845.5" width="7" height="22" fill="#74ad60"/>
<rect x="822.5" y="845.5" width="7" height="22" fill="#7fb800"/><rect x="829.5" y="845.5" width="7" height="22" fill="#8ebf00"/><rect x="836.5" y="845.5" width="7" height="22" fill="#9bc800"/><rect x="843.5" y="845.5" width="7" height="22" fill="#a9d000"/><rect x="850.5" y="845.5" width="7" height="22" fill="#b8d900"/><rect x="857.5" y="845.5" width="7" height="22" fill="#c7e100"/><rect x="864.5" y="845.5" width="7" height="22" fill="#d4e800"/><rect x="871.5" y="845.5" width="7" height="22" fill="#e2ee00"/><rect x="878.5" y="845.5" width="7" height="22" fill="#f0f300"/><rect x="885.5" y="845.5" width="7" height="22" fill="#fafa00"/>
<rect x="892.5" y="845.5" width="7" height="22" fill="#eecc00"/><rect x="899.5" y="845.5" width="7" height="22" fill="#e6aa00"/><rect x="906.5" y="845.5" width="7" height="22" fill="#d88000"/><rect x="913.5" y="845.5" width="7" height="22" fill="#cc5f00"/><rect x="920.5" y="845.5" width="7" height="22" fill="#bb2f00"/><rect x="927.5" y="845.5" width="7" height="22" fill="#c00"/><rect x="934.5" y="845.5" width="7" height="22" fill="#a0f"/><rect x="941.5" y="845.5" width="7" height="22" fill="#9200dd"/><rect x="948.5" y="845.5" width="7" height="22" fill="#7b00bb"/><rect x="955.5" y="845.5" width="7" height="22" fill="#640099"/><rect x="962.5" y="845.5" width="7" height="22" fill="#4a0077"/>
</g>
<path fill="none" stroke="#000" stroke-width="1" d="M619.5 867v6M640.5 867v6M661.5 867v6M682.5 867v6M703.5 867v6M724.5 867v6M745.5 867v6M766.5 867v6M787.5 867v6M808.5 867v6M829.5 867v6M850.5 867v6M871.5 867v6M892.5 867v6M913.5 867v6M934.5 867v6M955.5 867v6"/>
<g fill="#000" font-size="12" text-anchor="middle">
<text x="619" y="886">-50</text><text x="640" y="886">-47</text><text x="661" y="886">-44</text><text x="682" y="886">-41</text><text x="703" y="886">-38</text><text x="724" y="886">-35</text><text x="745" y="886">-32</text><text x="766" y="886">-29</text><text x="787" y="886">-26</text><text x="808" y="886">-23</text><text x="829" y="886">-20</text><text x="850" y="886">-17</text><text x="871" y="886">-14</text><text x="892" y="886">-11</text><text x="913" y="886">-8</text><text x="934" y="886">-5</text><text x="955" y="886">-2</text>
</g>
</g>
</svg>
</body></html>
